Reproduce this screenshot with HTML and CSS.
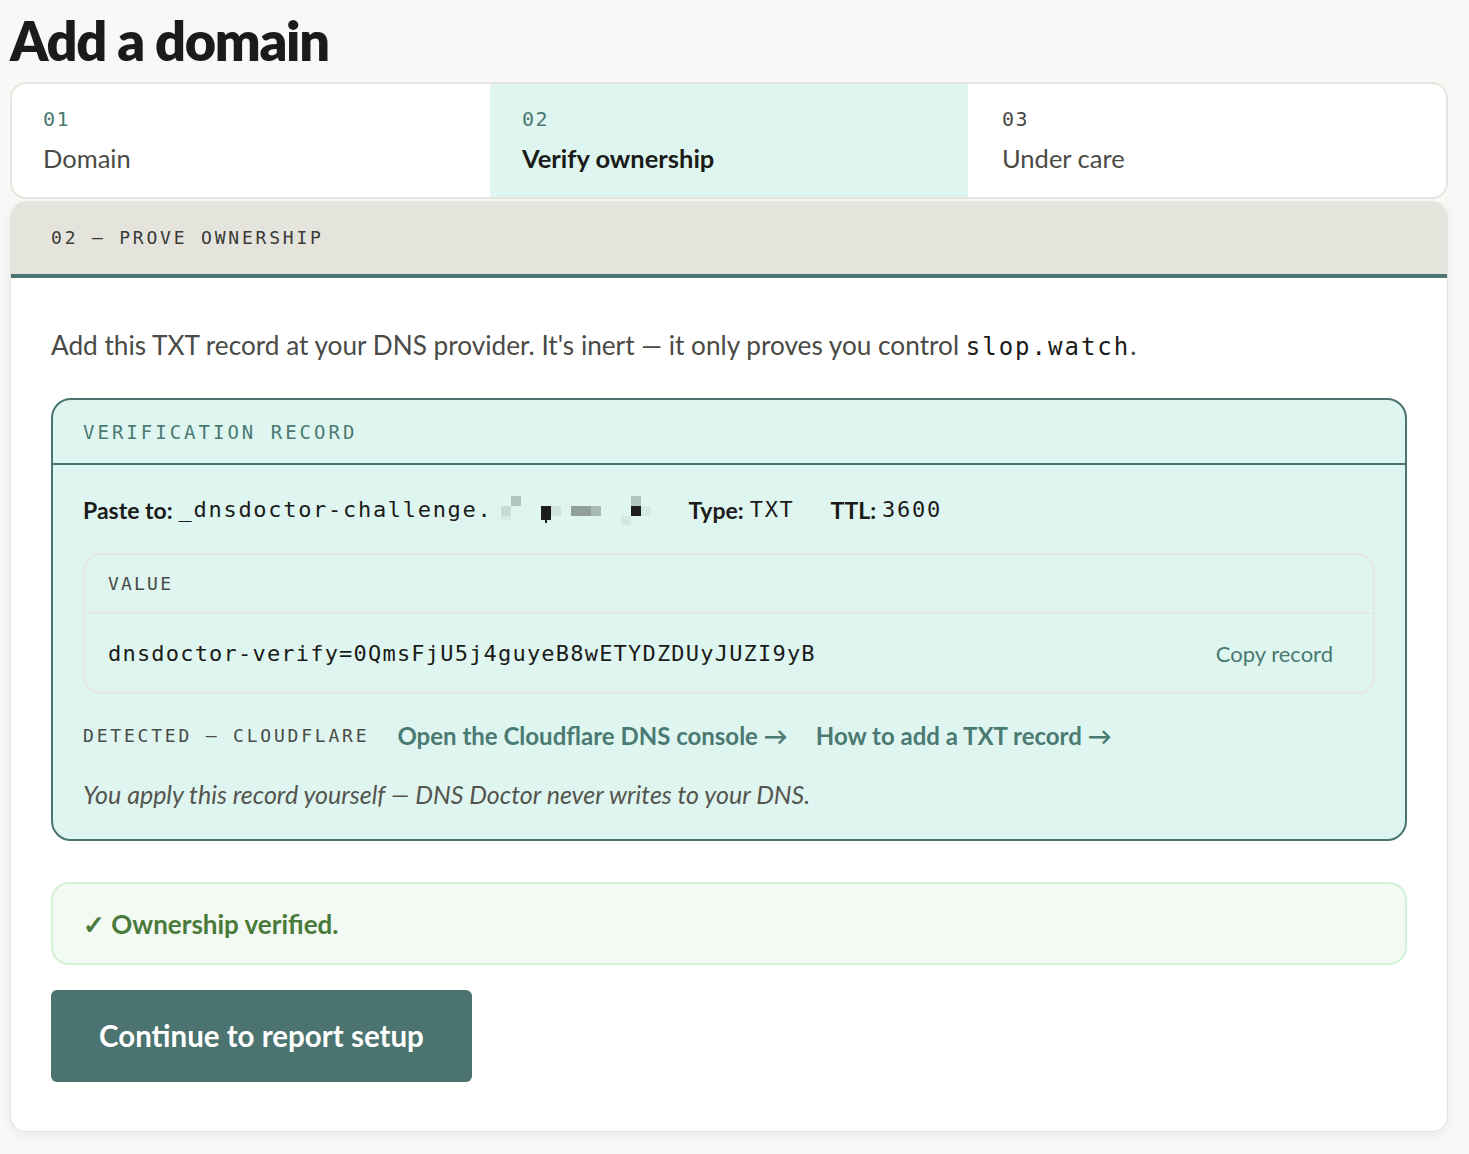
FILE: index.html
```html
<!DOCTYPE html>
<html lang="en">
<head>
    <meta charset="UTF-8">
    <meta name="viewport" content="width=device-width, initial-scale=1.0">
    <title>Add a domain - DNS Doctor</title>
    <link rel="stylesheet" href="styles.css">
</head>
<body>
    <div class="page">
        <h1 class="title">Add a domain</h1>

        <ol class="steps">
            <li class="step">
                <span class="step-num">01</span>
                <span class="step-label">Domain</span>
            </li>
            <li class="step active">
                <span class="step-num">02</span>
                <span class="step-label">Verify ownership</span>
            </li>
            <li class="step">
                <span class="step-num muted">03</span>
                <span class="step-label">Under care</span>
            </li>
        </ol>

        <section class="card">
            <div class="card-head">02 — PROVE OWNERSHIP</div>
            <div class="card-body">
                <p class="intro">Add this TXT record at your DNS provider. It's inert — it only proves you control <code class="host">slop.watch</code>.</p>

                <div class="record">
                    <div class="record-head">VERIFICATION RECORD</div>
                    <div class="record-body">
                        <div class="record-meta">
                            <span class="meta-item"><b>Paste to:</b> <code>_dnsdoctor-challenge.</code><svg class="redacted" width="160" height="30" viewBox="0 3 160 30" aria-hidden="true">
                                <rect x="19" y="4" width="10" height="10" fill="#b1c6c0"/>
                                <rect x="9" y="14" width="10" height="10" fill="#c6dcd5"/>
                                <rect x="9" y="24" width="10" height="4" fill="#d6ece6"/>
                                <rect x="49" y="14" width="10" height="14" fill="#1d1d1b"/>
                                <rect x="53" y="28" width="2" height="3" fill="#1d1d1b"/>
                                <rect x="59" y="14" width="10" height="10" fill="#cfe4de"/>
                                <rect x="79" y="14" width="20" height="10" fill="#909f9a"/>
                                <rect x="99" y="14" width="10" height="10" fill="#a9bab4"/>
                                <rect x="139" y="4" width="10" height="10" fill="#b1c6c0"/>
                                <rect x="139" y="14" width="10" height="10" fill="#1d1d1b"/>
                                <rect x="149" y="14" width="10" height="10" fill="#d4eae3"/>
                                <rect x="129" y="24" width="10" height="10" fill="#d3e8e2"/>
                            </svg></span>
                            <span class="meta-item"><b>Type:</b> <code>TXT</code></span>
                            <span class="meta-item"><b>TTL:</b> <code>3600</code></span>
                        </div>

                        <div class="value-box">
                            <div class="value-head">VALUE</div>
                            <div class="value-row">
                                <code class="value">dnsdoctor-verify=0QmsFjU5j4guyeB8wETYDZDUyJUZI9yB</code>
                                <a href="#" class="copy">Copy record</a>
                            </div>
                        </div>

                        <div class="detected">
                            <span class="detected-label">DETECTED — CLOUDFLARE</span>
                            <a href="#" class="link">Open the Cloudflare DNS console →</a>
                            <a href="#" class="link">How to add a TXT record →</a>
                        </div>

                        <p class="note">You apply this record yourself — DNS Doctor never writes to your DNS.</p>
                    </div>
                </div>

                <div class="verified">✓ Ownership verified.</div>

                <button type="button" class="continue">Continue to report setup</button>
            </div>
        </section>
    </div>
</body>
</html>
```

FILE: styles.css
```css
body {
    font-family: Lato, "Noto Sans", sans-serif;
    background-color: #f8f8f6;
    color: #4a4a47;
    margin: 0;
    padding: 0;
}
code {
    font-family: "DejaVu Sans Mono", monospace;
}
.page {
    width: 1438px;
    padding: 8px 0 20px 10px;
}
.title {
    margin: 0 0 9px;
    font-size: 54px;
    line-height: 65px;
    font-weight: 800;
    letter-spacing: -1.3px;
    color: #1b1b19;
}

/* stepper */
.steps {
    list-style: none;
    margin: 0;
    padding: 0;
    display: grid;
    grid-template-columns: repeat(3, 1fr);
    border: 2px solid #e6e6df;
    border-radius: 16px;
    background-color: #ffffff;
    overflow: hidden;
}
.step {
    display: flex;
    flex-direction: column;
    gap: 11px;
    padding: 22px 32px 24px;
}
.step:first-child {
    padding-left: 31px;
}
.step:last-child {
    padding-left: 34px;
}
.step.active {
    background-color: #dff6f0;
}
.step-num {
    font-family: "DejaVu Sans Mono", monospace;
    font-size: 20px;
    line-height: 26px;
    letter-spacing: 1.5px;
    color: #4a7a72;
}
.step-num.muted {
    color: #4a4a47;
}
.step-label {
    font-size: 25.5px;
    line-height: 30px;
}
.step.active .step-label {
    font-weight: 700;
    color: #1b1b19;
}

/* main card */
.card {
    margin-top: 2px;
    background-color: #ffffff;
    border: 1px solid #e4e4de;
    border-radius: 16px;
    box-shadow: 0 4px 12px rgba(0, 0, 0, 0.06);
    overflow: hidden;
}
.card-head {
    background-color: #e4e4dd;
    border-bottom: 4px solid #4a7570;
    height: 72px;
    line-height: 72px;
    padding: 0 40px;
    font-family: "DejaVu Sans Mono", monospace;
    font-size: 18px;
    letter-spacing: 2.8px;
    color: #3a3a37;
}
.card-body {
    padding: 49px 40px 49px;
}
.intro {
    margin: 0 0 33px;
    font-size: 26.2px;
    line-height: 36px;
}
.host {
    font-size: 24px;
    letter-spacing: 2px;
    color: #1b1b19;
}

/* verification record */
.record {
    background-color: #dff6f0;
    border: 2px solid #4a7570;
    border-radius: 20px;
}
.record-head {
    padding: 20px 30px 19px;
    border-bottom: 2px solid #4a7570;
    font-family: "DejaVu Sans Mono", monospace;
    font-size: 19px;
    line-height: 24px;
    letter-spacing: 3px;
    color: #4a7a72;
}
.record-body {
    padding: 30px 30px 30px;
}
.record-meta {
    display: flex;
    align-items: center;
    gap: 36px;
    font-size: 23px;
    line-height: 30px;
    color: #1b1b19;
}
.meta-item {
    display: flex;
    align-items: center;
}
.meta-item b {
    font-weight: 700;
    margin-right: 6px;
}
.meta-item code {
    font-size: 22px;
    letter-spacing: 1.7px;
}
.redacted {
    display: block;
}
.value-box {
    margin-top: 28px;
    border: 2px solid #e6e8e2;
    border-radius: 18px;
}
.value-head {
    padding: 18px 23px 17px;
    border-bottom: 2px solid #e6e8e2;
    font-family: "DejaVu Sans Mono", monospace;
    font-size: 18px;
    line-height: 22px;
    letter-spacing: 2.2px;
    color: #4a4a47;
}
.value-row {
    display: flex;
    justify-content: space-between;
    align-items: center;
    padding: 25px 40px 23px 23px;
    line-height: 30px;
}
.value {
    font-size: 22px;
    letter-spacing: 1.2px;
    color: #1b1b19;
}
.copy {
    font-size: 22px;
    color: #4a7a72;
    text-decoration: none;
}
.detected {
    display: flex;
    align-items: center;
    gap: 28px;
    margin-top: 27px;
    line-height: 30px;
}
.detected-label {
    font-family: "DejaVu Sans Mono", monospace;
    font-size: 18px;
    letter-spacing: 2.8px;
    color: #4a4a47;
}
.link {
    font-size: 24px;
    font-weight: 700;
    color: #4a7a72;
    text-decoration: none;
}
.note {
    margin: 28px 0 0;
    font-size: 25px;
    line-height: 30px;
    font-style: italic;
    color: #55554f;
}

/* status + action */
.verified {
    margin-top: 41px;
    padding: 24px 30px 23px;
    background-color: #f3faf3;
    border: 2px solid #d3f1d5;
    border-radius: 18px;
    font-size: 26px;
    line-height: 32px;
    font-weight: 700;
    color: #4a7a3a;
}
.continue {
    margin-top: 25px;
    display: block;
    padding: 30px 48px;
    background-color: #4b736f;
    color: #ffffff;
    border: none;
    border-radius: 6px;
    font-family: Lato, "Noto Sans", sans-serif;
    font-size: 29.5px;
    line-height: 32px;
    font-weight: 700;
    cursor: pointer;
}
```
